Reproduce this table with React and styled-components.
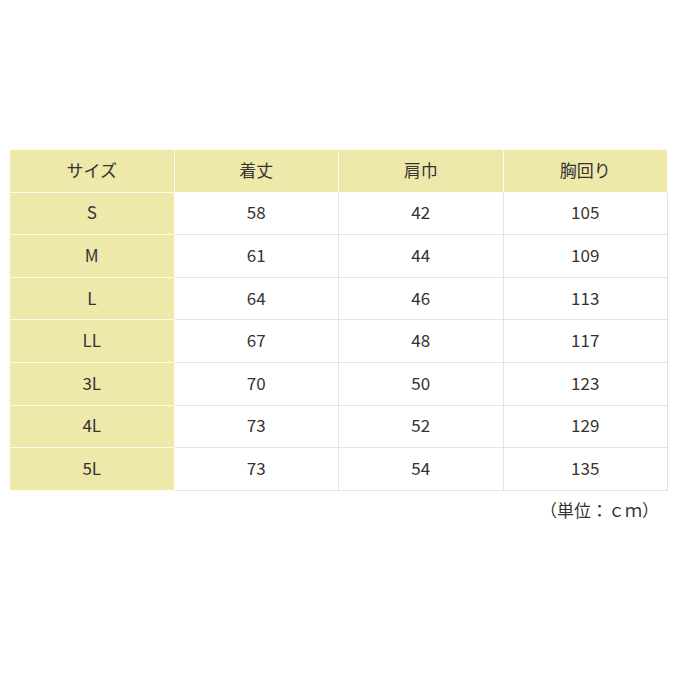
import React from "react";
import styled, { createGlobalStyle } from "styled-components";

const GlobalStyle = createGlobalStyle`
    body {
        margin: 0;
        background: #fff;
        font-family: "Noto Sans CJK JP", "Noto Sans", sans-serif;
        color: #333;
    }
`;

const Page = styled.div`
    padding: 149px 8px 0 9px;
    width: 659px;
`;

const Table = styled.table`
    width: 659px;
    border-collapse: collapse;
    table-layout: fixed;
`;

const Cell = styled.td`
    height: 42.6px;
    padding: 0 0 3px;
    box-sizing: border-box;
    text-align: center;
    vertical-align: middle;
    font-size: 17px;
    line-height: 1;
    border: 1px solid #e3e3e3;
    background: ${props => (props.head ? "#eee8aa" : "#fff")};
    ${props => props.head && "border-color: #fffbe8;"}
`;

const Note = styled.p`
    margin: 8px 0 0;
    padding-right: 9px;
    text-align: right;
    font-size: 17px;
    line-height: 22px;
`;

const headers = ["サイズ", "着丈", "肩巾", "胸回り"];

const rows = [
    ["S", 58, 42, 105],
    ["M", 61, 44, 109],
    ["L", 64, 46, 113],
    ["LL", 67, 48, 117],
    ["3L", 70, 50, 123],
    ["4L", 73, 52, 129],
    ["5L", 73, 54, 135],
];

const App = () => {
    return (
        <Page>
            <GlobalStyle />
            <Table>
                <thead>
                    <tr>
                        {headers.map(h => (
                            <Cell as="th" head key={h} style={{ fontWeight: "normal" }}>
                                {h}
                            </Cell>
                        ))}
                    </tr>
                </thead>
                <tbody>
                    {rows.map(row => (
                        <tr key={row[0]}>
                            {row.map((v, i) => (
                                <Cell head={i === 0} key={i}>
                                    {v}
                                </Cell>
                            ))}
                        </tr>
                    ))}
                </tbody>
            </Table>
            <Note>（単位：ｃｍ）</Note>
        </Page>
    );
};

export default App;
